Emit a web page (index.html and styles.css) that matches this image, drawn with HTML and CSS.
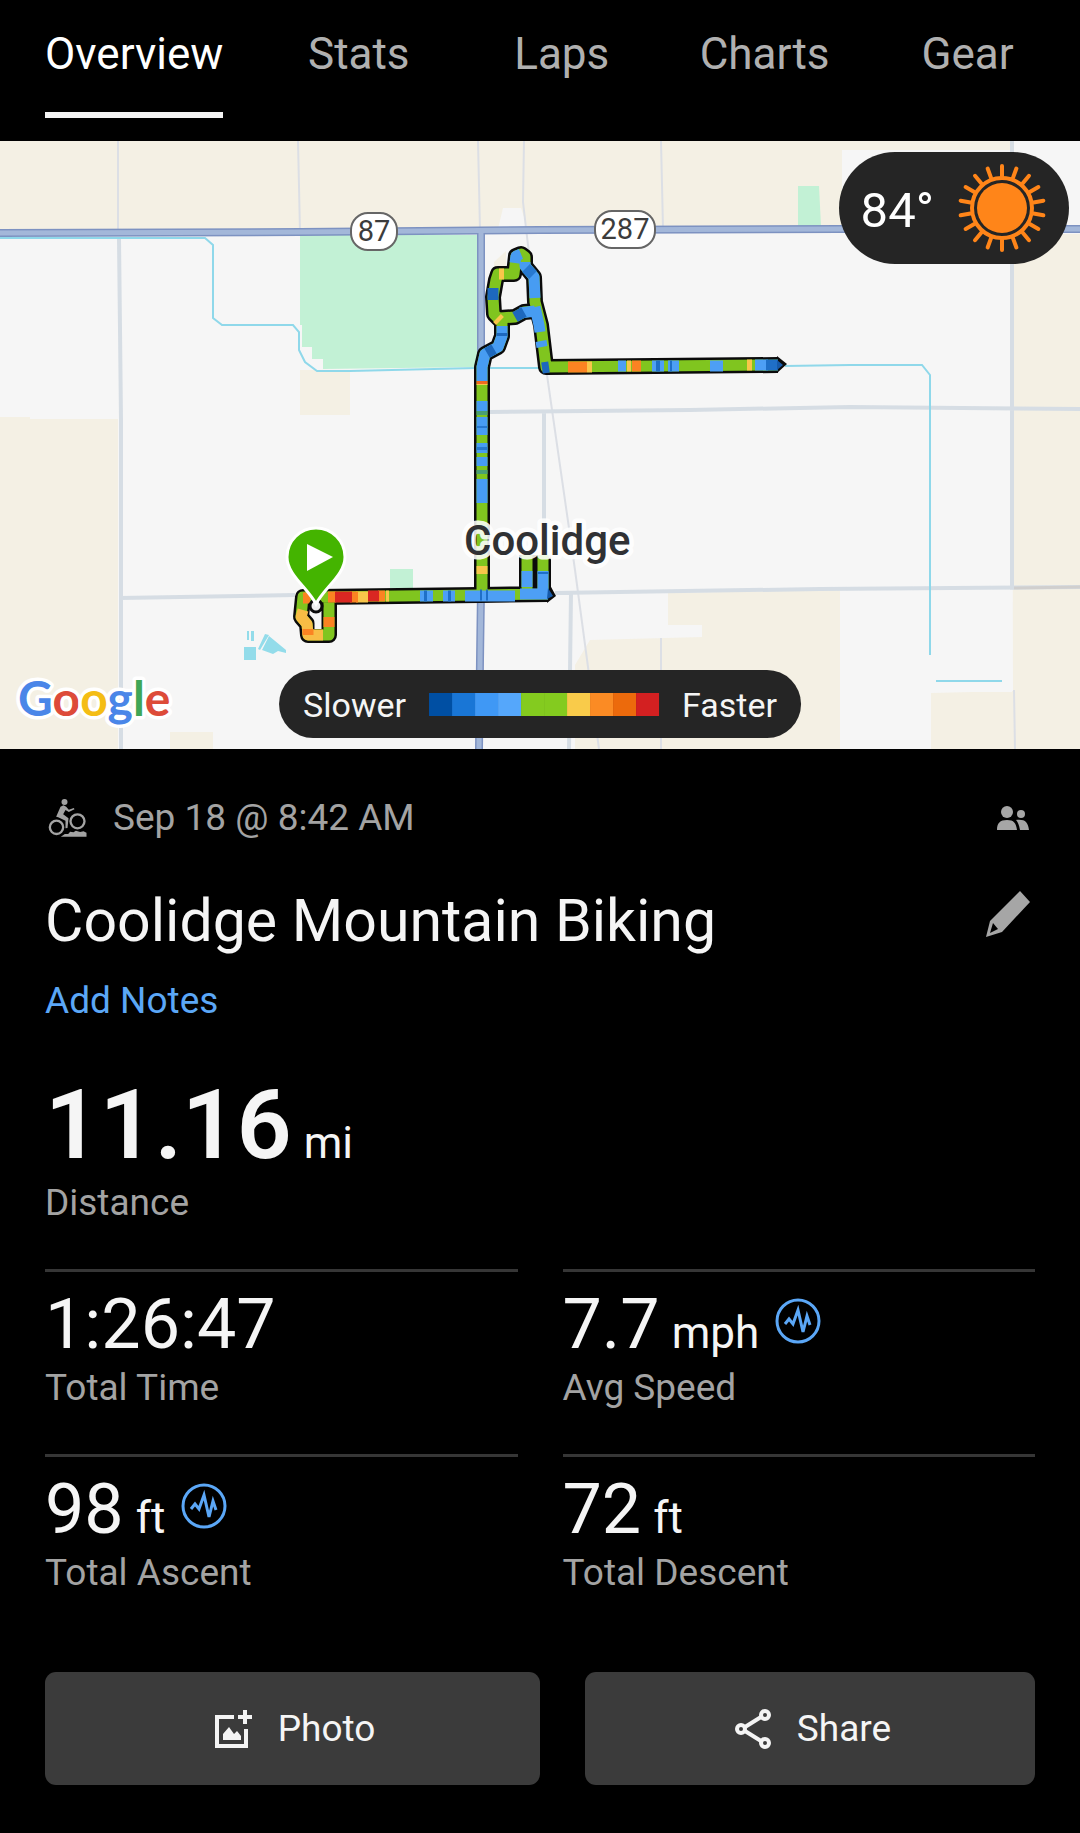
FILE: index.html
```html
<!DOCTYPE html>
<html lang="en">
<head>
<meta charset="utf-8">
<meta name="viewport" content="width=device-width, initial-scale=1">
<title>Coolidge Mountain Biking</title>
<link rel="stylesheet" href="styles.css">
</head>
<body>
<nav class="tabs">
  <a class="tab tab-active" href="#overview" aria-current="page"><span class="tab-label">Overview</span></a>
  <a class="tab" href="#stats"><span class="tab-label">Stats</span></a>
  <a class="tab" href="#laps"><span class="tab-label">Laps</span></a>
  <a class="tab" href="#charts"><span class="tab-label">Charts</span></a>
  <a class="tab" href="#gear"><span class="tab-label">Gear</span></a>
</nav>

<main id="overview">
  <section class="map" aria-label="Route map">
    <svg class="map-canvas" viewBox="0 141 1080 608" role="img" aria-label="Map of Coolidge with the ride route">
      <rect y="141" width="1080" height="608" fill="#f6f6f6"/>
      <!-- farmland -->
      <g fill="#f4f0e4">
        <path d="M0 141H1012V150H842V232H0Z"/>
        <path d="M0 417H30V419H118V749H0Z"/>
        <path d="M1012 234H1080V749H931V693L1013 691Z"/>
        <path d="M668 593L840 590V749H575V665L590 640L702 637V625H668Z"/>
        <path d="M300 370H350V415H300ZM170 732H213V749H170Z"/>
        <path d="M494 262L506 251V272H494Z"/>
      </g>
      <path d="M931 588H1012V692H931Z" fill="#f6f6f6"/>
      <path d="M498 229L503 208H521L528 229Z" fill="#f6f6f6"/>
      <!-- parks -->
      <g fill="#c2f1d5">
        <path d="M300 235H477V367L323 369V359H312V347H302V325H300Z"/>
        <path d="M798 186H819L821 226H798Z"/>
        <path d="M390 569H413V588H390Z"/>
      </g>
      <!-- minor roads -->
      <g fill="none" stroke="#dcdfe5" stroke-width="2">
        <path d="M118 141V232M298 141L300 232M478 141L480 230M524 141L523 202L528 245L547 375L575 570L599 749M661 141L663 228M661 638V749M1014 690L1015 749"/>
      </g>
      <g fill="none" stroke="#d6dde4" stroke-width="4">
        <path d="M119 238L121 420V749M490 412L690 410L850 407L1080 409M544 412V600M1012 141V590M120 598L295 595M555 593L820 589L1080 587M571 593L569 749"/>
      </g>
      <path d="M1014 588L1080 587" stroke="#d0cfce" stroke-width="3"/>
      <!-- canals and ponds -->
      <g fill="none" stroke="#8fd8ea" stroke-width="2">
        <path d="M0 238H205L213 245V318L222 325H293L299 332V350L305 362L317 371H350L476 368H560M785 366L850 365H922L930 375V655M936 681H1002"/>
      </g>
      <path d="M244 647H256V660H244ZM247 631H249V640H247ZM251 631H254V641H251ZM258 649L265 634L269 635L260 650ZM262 650L269 636L286 650V653L278 651L273 654Z" fill="#93dcea"/>
      <!-- highways -->
      <g fill="none" stroke="#7d92c1" stroke-width="8">
        <path d="M0 233L300 232L540 230L840 229L1080 229"/>
        <path d="M481 231V590L480 660L479 749"/>
      </g>
      <g fill="none" stroke="#a3b7d9" stroke-width="5">
        <path d="M0 233L300 232L540 230L840 229L1080 229"/>
        <path d="M481 231V590L480 660L479 749"/>
      </g>
      <g class="shield">
        <rect x="351" y="213" width="46" height="37" rx="17"/>
        <text x="374" y="241">87</text>
        <rect x="595" y="211" width="60" height="37" rx="17"/>
        <text x="625" y="239">287</text>
      </g>

      <!-- route outline -->
      <g fill="none" stroke="#0b0b0b" stroke-width="16" stroke-linejoin="round">
        <path d="M482 594V367L485 354L498 347L502 336V322L494 314L493 297L496 280L498 274H514L516 256L521 254L525 257V266L534 277L535 302L541 325L546 367L778 365"/>
        <path d="M500 318L515 317L524 312L535 311"/>
        <path d="M317 597L480 595L548 594M527 594V555M543 594V555"/>
        <path d="M317 597H303L301 617L307 624L308 635H329V600"/>
      </g>
      <path d="M777 356L787 364L777 373ZM550 585L556 596L547 603Z" fill="#0b0b0b"/>
      <!-- route speed colours -->
      <g fill="none" stroke-width="11" stroke-linejoin="round">
        <path stroke="#80c51f" d="M482 594V367L485 354L498 347L502 336V322L494 314L493 297L496 280L498 274H514L516 256L521 254L525 257V266L534 277L535 302L541 325L546 367L778 365"/>
        <path stroke="#80c51f" d="M500 318L515 317L524 312L535 311M317 597L480 595L548 594M527 594V555M543 594V555M317 597H303L301 617L307 624L308 635H329V600"/>
        <path stroke="#479cf2" d="M482 381V367L485 354L498 347L502 336V326M515 263L516 256L521 254M525 262V266L534 277L535 298M535 307L539 325L540 332M541 341L542 347M520 313L535 311"/>
        <path stroke="#1d68bd" d="M493 300V288M487 353L494 349M515 317L524 312M542 368L549 367M502 336V333"/>
        <path stroke="#2879cf" d="M526 268L533 275"/>
        <path stroke="#f8c64a" d="M499 274H504M497 318L500 321"/>
        <path stroke="#479cf2" d="M482 401V411M482 417V435M482 443V453M482 457V466M482 479V503"/>
        <path stroke="#4a9f74" d="M482 411V415M482 470V474"/>
        <path stroke="#2879cf" d="M482 447V450M482 426V428"/>
        <path stroke="#f06a20" d="M482 381V384"/>
        <path stroke="#f8c64a" d="M482 384V385M482 566V574M587 367H592M627 366H631M747 365H752M386 596H389M356 597H368"/>
        <path stroke="#fb8322" d="M568 367H587M632 366H641M328 597H336M350 597H358M378 596H385"/>
        <path stroke="#d92722" d="M335 597H352M368 596H379"/>
        <path stroke="#4d9ff5" d="M618 366H626M652 366H664M668 366H679M710 366H723M755 365H768M420 596H433M443 596H455M465 596H515M520 594H548M527 587V571M543 590V571"/>
        <path stroke="#1f6fc7" d="M766 365H778M656 366H660M670 366H672M424 596H427M448 596H451M480 595H482M486 595H488M543 572V574"/>
        <path stroke="#f8bd45" d="M303 610L301 617L307 624L308 635H323"/>
        <path stroke="#fb8322" d="M329 617V627M308 629V635M303 598H310"/>
      </g>
      <path d="M777 360L783 365L777 370ZM548 588L553 596L547 599Z" fill="#1659a8"/>
      <path d="M318 611V629" stroke="#f6f6f6" stroke-width="7"/>
      <circle cx="316" cy="606" r="6" fill="#eee" stroke="#0b0b0b" stroke-width="3"/>

      <!-- start pin -->
      <path d="M316 604C308 588 287 575 287 557A29 29 0 0 1 345 557C345 575 324 588 316 604Z" fill="#44b400" stroke="#fff" stroke-width="3"/>
      <path d="M307 544V571L333 557Z" fill="#fff"/>

      <text class="town" x="464" y="555">Coolidge</text>
      <text class="brand" x="18" y="716"><tspan fill="#4a86e8">G</tspan><tspan fill="#dd4b39">o</tspan><tspan fill="#f4bd15">o</tspan><tspan fill="#4a86e8">g</tspan><tspan fill="#3fa757">l</tspan><tspan fill="#dd4b39">e</tspan></text>
    </svg>

    <div class="weather">
      <span class="temperature">84°</span>
      <svg class="sun" viewBox="-44 -44 88 88" role="img" aria-label="Sunny">
        <circle r="25" fill="#ff8519"/>
        <circle r="30" fill="none" stroke="#ff8519" stroke-width="4"/>
        <g stroke="#ff8519" stroke-width="4" stroke-linecap="round">
          <path id="ray" d="M0 -32V-42"/>
          <use href="#ray" transform="rotate(20)"/><use href="#ray" transform="rotate(40)"/>
          <use href="#ray" transform="rotate(60)"/><use href="#ray" transform="rotate(80)"/>
          <use href="#ray" transform="rotate(100)"/><use href="#ray" transform="rotate(120)"/>
          <use href="#ray" transform="rotate(140)"/><use href="#ray" transform="rotate(160)"/>
          <use href="#ray" transform="rotate(180)"/><use href="#ray" transform="rotate(200)"/>
          <use href="#ray" transform="rotate(220)"/><use href="#ray" transform="rotate(240)"/>
          <use href="#ray" transform="rotate(260)"/><use href="#ray" transform="rotate(280)"/>
          <use href="#ray" transform="rotate(300)"/><use href="#ray" transform="rotate(320)"/>
          <use href="#ray" transform="rotate(340)"/>
        </g>
      </svg>
    </div>

    <div class="legend">
      <span>Slower</span>
      <span class="scale">
        <i class="s1"></i><i class="s2"></i><i class="s3"></i><i class="s4"></i><i class="s5"></i><i class="s5"></i><i class="s6"></i><i class="s7"></i><i class="s8"></i><i class="s9"></i>
      </span>
      <span>Faster</span>
    </div>
  </section>

  <section class="details">
    <div class="meta">
      <svg class="icon-bike" viewBox="18 16 116 120" role="img" aria-label="Mountain biking">
        <g fill="none" stroke="#a3a3a3" stroke-width="7">
          <circle cx="43" cy="104" r="20"/>
          <circle cx="106" cy="86" r="21"/>
        </g>
        <circle cx="67" cy="28" r="9" fill="#a3a3a3"/>
        <path d="M55 42L64 38L72 42L80 51L95 46L97 50L80 58L70 52L63 65L79 77L76 106L70 107L70 84L48 74L42 72Z" fill="#a3a3a3"/>
        <path d="M56 132L68 124L78 124L84 117L94 119L101 114L114 118L124 116L133 120V132Z" fill="#a3a3a3"/>
      </svg>
      <time class="date">Sep 18 @ 8:42 AM</time>
      <svg class="icon-people" viewBox="0 0 34 26" role="img" aria-label="Visible to connections">
        <g fill="#a6a6a6">
          <circle cx="11" cy="7" r="6"/><circle cx="25" cy="9" r="4"/>
          <path d="M1 25C1 18 4 15 11 15S20 18 21 25ZM20 15C29 14 32 17 33 25H24C23 20 22 17 20 15Z"/>
        </g>
      </svg>
    </div>
    <div class="heading">
      <h1>Coolidge Mountain Biking</h1>
      <button class="edit" type="button" aria-label="Edit">
        <svg class="icon-pencil" viewBox="0 0 46 48" aria-hidden="true">
          <path d="M35 1L45 12L17 42L1 47L5 31ZM8 33L5 43L13 39Z" fill="#a6a6a6" fill-rule="evenodd"/>
        </svg>
      </button>
    </div>
    <a class="notes" href="#notes">Add Notes</a>

    <dl class="stats">
      <div class="stat stat-main">
        <dt>Distance</dt>
        <dd><span class="value">11.16</span><span class="unit">mi</span></dd>
      </div>
      <div class="stat">
        <dt>Total Time</dt>
        <dd><span class="value">1:26:47</span></dd>
      </div>
      <div class="stat">
        <dt>Avg Speed</dt>
        <dd><span class="value">7.7</span><span class="unit">mph</span>
          <button class="chart" type="button" aria-label="Speed chart">
            <svg class="icon-chart" viewBox="0 0 46 46" aria-hidden="true"><g fill="none" stroke="#5ba7f7" stroke-width="3"><circle cx="23" cy="23" r="21"/><path d="M10 26L14 21L18 26L23 12L28 34L32 18L35 27"/></g></svg>
          </button></dd>
      </div>
      <div class="stat">
        <dt>Total Ascent</dt>
        <dd><span class="value">98</span><span class="unit">ft</span>
          <button class="chart" type="button" aria-label="Elevation chart">
            <svg class="icon-chart" viewBox="0 0 46 46" aria-hidden="true"><g fill="none" stroke="#5ba7f7" stroke-width="3"><circle cx="23" cy="23" r="21"/><path d="M10 26L14 21L18 26L23 12L28 34L32 18L35 27"/></g></svg>
          </button></dd>
      </div>
      <div class="stat">
        <dt>Total Descent</dt>
        <dd><span class="value">72</span><span class="unit">ft</span></dd>
      </div>
    </dl>

    <div class="actions">
      <button class="action" type="button">
        <svg class="icon-action" viewBox="0 0 40 40" aria-hidden="true">
          <path d="M20 8H3V37H32V20" fill="none" stroke="#f4f4f4" stroke-width="4"/>
          <path d="M31 1V15M24 8H38" stroke="#f4f4f4" stroke-width="4"/>
          <path d="M9 31V25L15 18L20 25L23 22L27 27V31Z" fill="#f4f4f4"/>
        </svg>
        Photo
      </button>
      <button class="action" type="button">
        <svg class="icon-action" viewBox="0 0 40 40" aria-hidden="true">
          <g fill="none" stroke="#f4f4f4" stroke-width="4">
            <circle cx="8" cy="20" r="4"/><circle cx="32" cy="6" r="4"/><circle cx="32" cy="34" r="4"/>
            <path d="M12 18L28 8M12 22L28 32"/>
          </g>
        </svg>
        Share
      </button>
    </div>
  </section>
</main>
</body>
</html>
```
FILE: styles.css
```css
* {
  box-sizing: border-box;
}

body {
  margin: 0;
  background: #000;
  color: #f5f5f5;
  font-family: Roboto, "Liberation Sans", sans-serif;
  font-size: 37px;
  line-height: 44px;
}

a {
  text-decoration: none;
}

button {
  font: inherit;
  color: inherit;
  border: 0;
  padding: 0;
  background: none;
  cursor: pointer;
}

svg {
  display: block;
  flex: none;
}

/* Tabs */
.tabs {
  display: flex;
  padding: 28px 11px 23px;
  font-size: 44px;
  line-height: 52px;
}

.tab {
  flex: 1;
  display: flex;
  justify-content: center;
  color: #b0b0b0;
}

.tab-active {
  flex: none;
  padding: 0 34px;
  color: #fff;
}

.tab-label {
  padding-bottom: 32px;
  border-bottom: 6px solid transparent;
}

.tab-active .tab-label {
  border-color: #f4f4f4;
}

/* Map */
.map {
  position: relative;
}

.map-canvas {
  width: 100%;
  height: auto;
}

.shield rect {
  fill: #fff;
  stroke: #666;
  stroke-width: 2px;
}

.shield text {
  fill: #3c3c3c;
  font-size: 29px;
  text-anchor: middle;
}

.town {
  fill: #303134;
  stroke: #fff;
  stroke-opacity: 0.9;
  stroke-width: 9px;
  stroke-linejoin: round;
  paint-order: stroke;
  font-size: 42px;
  font-weight: 500;
}

.brand {
  stroke: #fff;
  stroke-width: 7px;
  stroke-linejoin: round;
  paint-order: stroke;
  font-family: Lato, sans-serif;
  font-size: 48px;
  font-weight: 700;
}

.weather,
.legend {
  position: absolute;
  display: flex;
  align-items: center;
  background: #252525;
}

.weather {
  top: 11px;
  right: 11px;
  height: 112px;
  padding: 0 23px 0 22px;
  gap: 24px;
  border-radius: 56px;
  color: #fff;
  font-size: 49px;
}

.temperature {
  padding-top: 5px;
}

.sun {
  width: 88px;
  height: 88px;
}

.legend {
  bottom: 11px;
  left: 50%;
  transform: translateX(-50%);
  height: 68px;
  padding: 1px 24px 0;
  gap: 23px;
  border-radius: 34px;
  font-size: 34px;
}

.scale {
  display: flex;
}

.scale i {
  width: 23px;
  height: 23px;
}

.s1 { background: #004fa3; }
.s2 { background: #1976d6; }
.s3 { background: #3f98f5; }
.s4 { background: #55a7fb; }
.s5 { background: #84cb1f; }
.s6 { background: #f9cb4a; }
.s7 { background: #fb8b24; }
.s8 { background: #ec6a0c; }
.s9 { background: #d32021; }

/* Activity details */
.details {
  padding: 47px 45px 48px;
}

.meta {
  display: flex;
  align-items: center;
  padding: 0 5px 0 3px;
}

.date {
  margin: 0 auto 0 26px;
  color: #a3a3a3;
}

.icon-bike {
  width: 39px;
  height: 40px;
}

.icon-people {
  width: 34px;
  height: 26px;
}

.heading {
  display: flex;
  justify-content: space-between;
  align-items: flex-start;
  margin-top: 45px;
  padding-right: 4px;
}

h1 {
  margin: 0;
  font-size: 59px;
  font-weight: 400;
  line-height: 72px;
}

.edit {
  padding-top: 5px;
}

.icon-pencil {
  width: 46px;
  height: 48px;
}

.notes {
  display: inline-block;
  margin-top: 22px;
  color: #5ba7f7;
}

.stats {
  display: grid;
  grid-template-columns: 1fr 1fr;
  gap: 44px 45px;
  margin: 46px 0 0;
}

.stat {
  display: flex;
  flex-direction: column-reverse;
  justify-content: flex-end;
  border-top: 3px solid #363636;
  padding-top: 10px;
}

.stat dt {
  color: #a3a3a3;
}

.stat dd {
  display: flex;
  align-items: baseline;
  margin: 0;
}

.value {
  font-size: 70px;
  line-height: 84px;
}

.unit {
  margin-left: 12px;
  font-size: 44px;
}

.chart {
  align-self: flex-start;
  margin: 16px 0 0 16px;
}

.icon-chart {
  width: 46px;
  height: 46px;
}

.stat-main {
  grid-column: 1 / -1;
  border: 0;
  padding: 0;
}

.stat-main .value {
  font-size: 96px;
  font-weight: 600;
  line-height: 112px;
}

.actions {
  display: grid;
  grid-template-columns: 11fr 10fr;
  gap: 45px;
  margin-top: 77px;
}

.action {
  display: flex;
  justify-content: center;
  align-items: center;
  gap: 24px;
  height: 113px;
  padding-left: 4px;
  border-radius: 11px;
  background: #3b3b3b;
}

.icon-action {
  width: 40px;
  height: 40px;
}
```
